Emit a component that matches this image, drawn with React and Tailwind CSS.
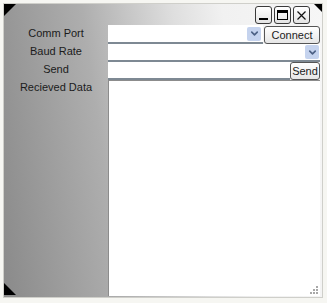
import { ChevronDown } from 'lucide-react';

const labelFont = { fontFamily: '"Liberation Sans", Arial, sans-serif' };

function DropArrow() {
  return (
    <div className="flex h-[14px] w-[14px] items-center justify-center rounded-[2px] bg-[#c5d3ee]">
      <ChevronDown className="h-[11px] w-[11px] text-[#4d6185]" strokeWidth={3.5} />
    </div>
  );
}

function WinButton({ children }) {
  return (
    <div className="flex h-[18px] w-[17px] items-center justify-center rounded-[3px] border border-[#3a3a3a] bg-gradient-to-b from-white to-[#e4e4e4]">
      {children}
    </div>
  );
}

export default function App() {
  return (
    <div className="h-[303px] w-[327px] bg-[#f6f6f2] p-[3px]" style={labelFont}>
      <div className="relative flex h-[295px] w-[320px] flex-col border border-[#cfcfca] bg-[linear-gradient(82deg,#8a8a8a_0%,#aeaeae_33%,#dedede_58%,#f1f1f1_72%,#f6f6f6_100%)]">
        {/* corner marks */}
        <div className="absolute left-0 top-0 h-0 w-0 border-l-[6px] border-t-[6px] border-l-black border-t-black border-r-transparent border-b-transparent border-r-[6px] border-b-[6px]" />
        <div className="absolute right-0 top-0 h-0 w-0 border-r-[4px] border-t-[4px] border-r-black border-t-black border-l-[4px] border-b-[4px] border-l-transparent border-b-transparent" />
        <div className="absolute bottom-[2px] left-0 h-0 w-0 border-b-[6px] border-l-[6px] border-b-black border-l-black border-r-[6px] border-t-[6px] border-r-transparent border-t-transparent" />

        <div className="flex justify-end gap-[2px] pr-[12px] pt-[2px]">
          <WinButton>
            <div className="mt-[8px] h-[2px] w-[9px] bg-black" />
          </WinButton>
          <WinButton>
            <div className="h-[10px] w-[11px] border border-t-[3px] border-black" />
          </WinButton>
          <WinButton>
            <svg width="11" height="11" viewBox="0 0 11 11">
              <path d="M1.5 1.5 L9.5 9.5 M9.5 1.5 L1.5 9.5" stroke="#111" strokeWidth="1.2" />
            </svg>
          </WinButton>
        </div>

        <div className="mt-[1px] flex flex-1">
          <div className="-mt-[1px] flex w-[104px] flex-col text-center text-[11px] leading-[18px] text-[#1b1b1b]">
            <div className="h-[18px]">Comm Port</div>
            <div className="h-[18px]">Baud Rate</div>
            <div className="h-[18px]">Send</div>
            <div className="h-[18px]">Recieved Data</div>
          </div>
          <div className="flex flex-1 flex-col pr-[2px]">
            <div className="flex h-[19px] items-stretch">
              <div className="flex flex-1 items-center justify-end border-b-2 border-[#7e8993] bg-white pr-[2px]">
                <DropArrow />
              </div>
              <div className="ml-[1px] mt-[1px] flex w-[56px] items-center justify-center rounded-[3px] border border-[#555] bg-gradient-to-b from-white to-[#e6e6e6] text-[11px] text-[#1b1b1b]">
                Connect
              </div>
            </div>
            <div className="flex h-[18px] items-center justify-end border-b-2 border-[#7e8993] bg-white pr-[1px]">
              <DropArrow />
            </div>
            <div className="flex h-[18px] items-stretch">
              <div className="flex-1 border-b-2 border-[#7e8993] bg-white" />
              <div className="flex w-[30px] items-center justify-center rounded-[3px] border border-[#555] bg-gradient-to-b from-white to-[#e6e6e6] text-[11px] text-[#1b1b1b]">
                Send
              </div>
            </div>
            <div className="relative mb-[1px] flex-1 border-l border-t border-[#8c8c8c] bg-white">
              <div className="absolute bottom-[2px] right-[2px] grid grid-cols-3 gap-[1px]">
                <span />
                <span />
                <span className="h-[2px] w-[2px] bg-[#a8a8a8]" />
                <span />
                <span className="h-[2px] w-[2px] bg-[#a8a8a8]" />
                <span className="h-[2px] w-[2px] bg-[#a8a8a8]" />
                <span className="h-[2px] w-[2px] bg-[#a8a8a8]" />
                <span className="h-[2px] w-[2px] bg-[#a8a8a8]" />
                <span className="h-[2px] w-[2px] bg-[#a8a8a8]" />
              </div>
            </div>
          </div>
        </div>
      </div>
    </div>
  );
}
